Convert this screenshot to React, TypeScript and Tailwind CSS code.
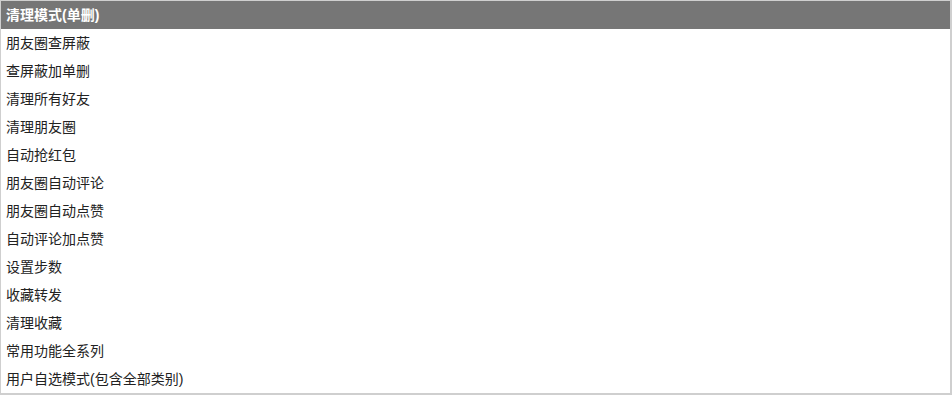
const items = [
	"清理模式(单删)",
	"朋友圈查屏蔽",
	"查屏蔽加单删",
	"清理所有好友",
	"清理朋友圈",
	"自动抢红包",
	"朋友圈自动评论",
	"朋友圈自动点赞",
	"自动评论加点赞",
	"设置步数",
	"收藏转发",
	"清理收藏",
	"常用功能全系列",
	"用户自选模式(包含全部类别)",
];

export default function App() {
	const selected = 0;
	return (
		<div
			className="h-[395px] w-[952px] bg-white"
			style={{ fontFamily: '"Liberation Sans", "Noto Sans CJK SC", sans-serif' }}
		>
			<ul className="h-full w-full border-t border-l border-r-2 border-b-2 border-[#cfcfcf] bg-white">
				{items.map((label, i) => (
					<li
						key={label}
						className={
							i === selected
								? "flex h-[28px] items-center bg-[#767676] pl-[5px] text-[14px] font-bold text-white"
								: "flex h-[28px] items-center pl-[5px] text-[14px] text-[#222]"
						}
					>
						{label}
					</li>
				))}
			</ul>
		</div>
	);
}
